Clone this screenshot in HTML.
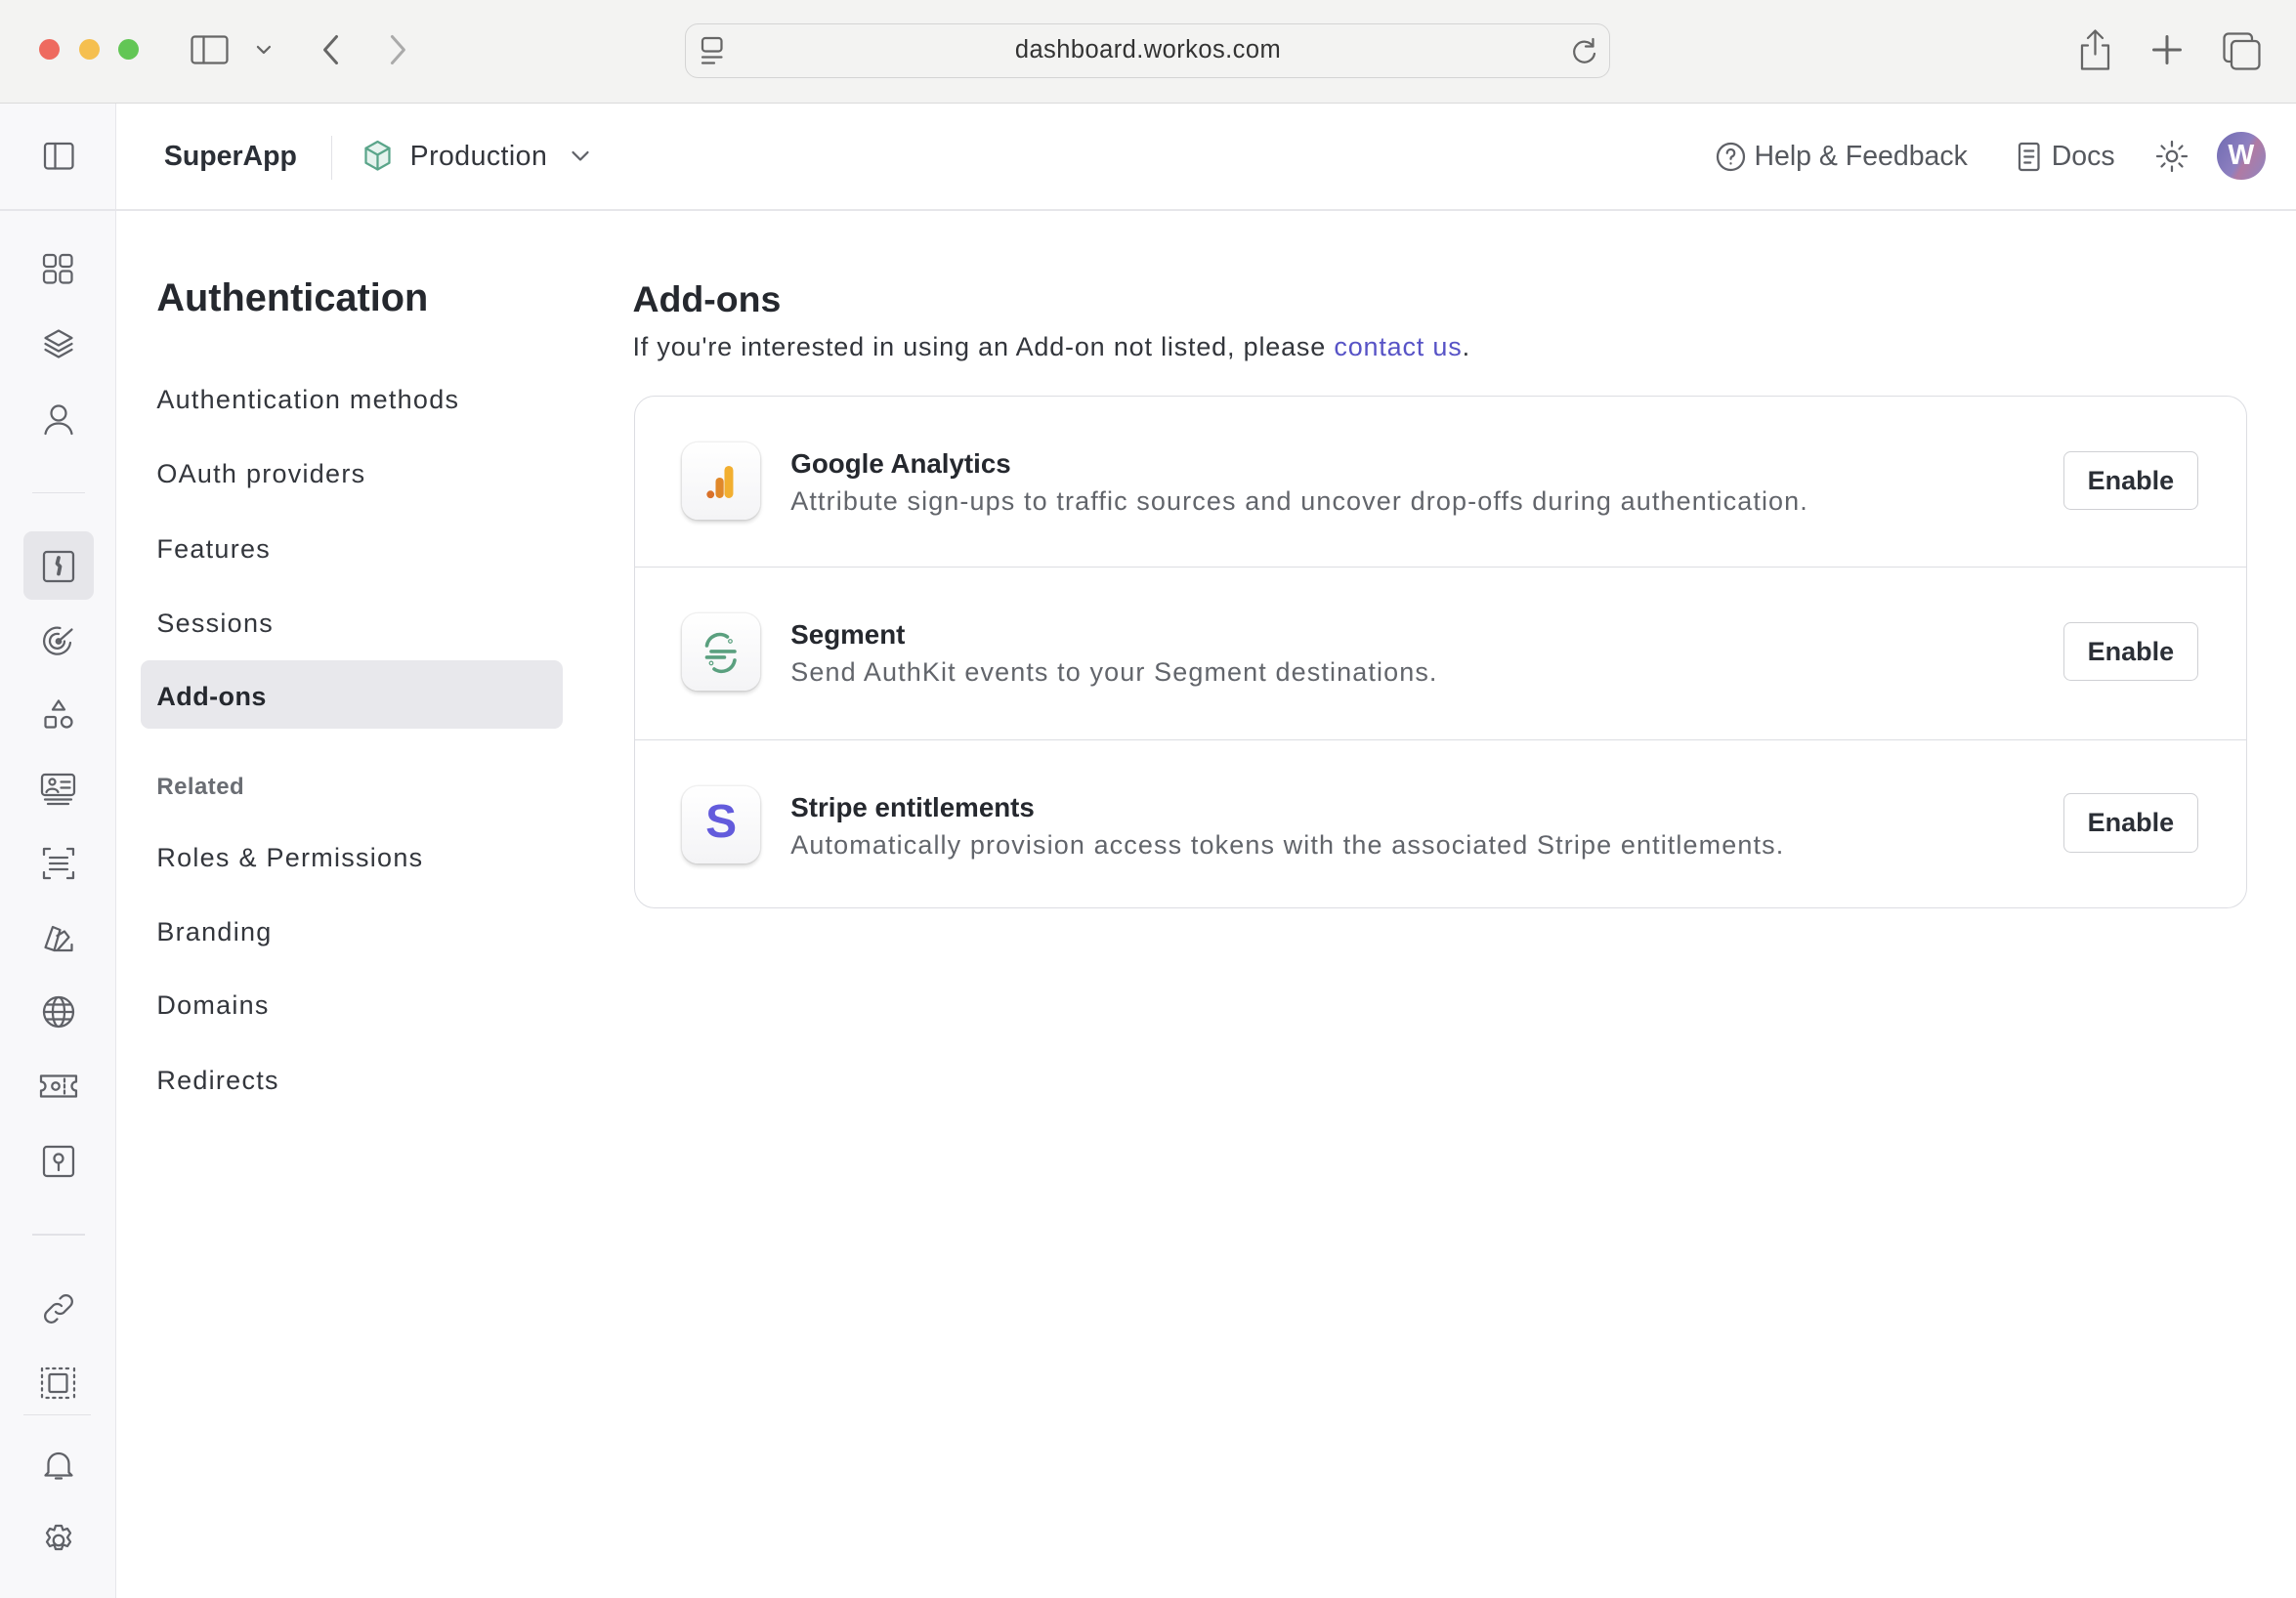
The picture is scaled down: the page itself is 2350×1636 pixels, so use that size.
<!DOCTYPE html>
<html><head><meta charset="utf-8">
<style>
html,body{margin:0;padding:0;width:2350px;height:1636px;overflow:hidden;background:#fff}
#w{zoom:1.49872;width:1568px;height:1092px;position:relative;font-family:"Liberation Sans",sans-serif;color:#2b2f36}
.a{position:absolute}
svg.i{position:absolute;fill:none;stroke:#5f6167;stroke-width:1.5;stroke-linecap:round;stroke-linejoin:round}
.nav{position:absolute;left:107px;font-size:18px;color:#33363c;line-height:22px;letter-spacing:0.85px}
.row-t{position:absolute;left:540px;font-size:18.5px;font-weight:bold;color:#25282e}
.row-d{position:absolute;left:540px;font-size:18px;color:#62656b;letter-spacing:0.75px}
.btn{position:absolute;left:1409px;width:91px;height:39px;border:1px solid #cfd0d4;border-radius:5px;font-size:18px;font-weight:bold;color:#2b2f36;text-align:center;line-height:39px;background:#fff}
.ic{position:absolute;left:466px;width:53px;height:53px;border-radius:11px;background:linear-gradient(#fff,#f4f4f6);box-shadow:0 2px 3px rgba(0,0,0,.15),0 0 0 1px rgba(0,0,0,.05)}
</style></head><body><div id="w">
<div class="a" style="left:0;top:0;width:1568px;height:70px;background:#f3f3f2;border-bottom:1px solid #dadada"></div>
<div class="a" style="left:27px;top:27px;width:14px;height:14px;border-radius:50%;background:#ee6a5f"></div>
<div class="a" style="left:54px;top:27px;width:14px;height:14px;border-radius:50%;background:#f5bf4f"></div>
<div class="a" style="left:81px;top:27px;width:14px;height:14px;border-radius:50%;background:#62c655"></div>
<svg class="i" style="left:128px;top:22px;stroke:#666" width="60" height="24"><rect x="3" y="3" width="24" height="18" rx="2"/><line x1="11" y1="3" x2="11" y2="21"/><path d="M48 10l4 4 4-4"/></svg>
<svg class="i" style="left:215px;top:22px;stroke:#666;stroke-width:2" width="70" height="24"><path d="M15 3l-8 9 8 9"/><path d="M53 3l8 9-8 9" stroke="#aaa"/></svg>
<div class="a" style="left:468px;top:16px;width:630px;height:36px;border:1px solid #d4d4d4;border-radius:9px;background:#f3f3f2"></div>
<svg class="i" style="left:478px;top:24px;stroke:#666" width="20" height="22"><rect x="2" y="2" width="13" height="9" rx="2"/><line x1="2" y1="15" x2="15" y2="15"/><line x1="2" y1="19" x2="10" y2="19"/></svg>
<div class="a" style="left:468px;top:25px;width:632px;text-align:center;font-size:17px;color:#333;letter-spacing:0.3px">dashboard.workos.com</div>
<svg class="i" style="left:1073px;top:25px;stroke:#666" width="20" height="20"><path d="M15 7a7 7 0 1 0 1 5"/><path d="M15 2v5h-5"/></svg>
<svg class="i" style="left:1418px;top:18px;stroke:#666" width="26" height="32"><path d="M13 3v16M8 8l5-5 5 5"/><path d="M8 13H4v16h18V13h-4"/></svg>
<svg class="i" style="left:1468px;top:22px;stroke:#666;stroke-width:2" width="24" height="24"><path d="M12 3v18M3 12h18"/></svg>
<svg class="i" style="left:1516px;top:20px;stroke:#666" width="30" height="30"><rect x="3" y="3" width="19" height="19" rx="3"/><rect x="8" y="8" width="19" height="19" rx="3" fill="#f3f3f2"/></svg>
<div class="a" style="left:0;top:71px;width:79px;height:1021px;background:#f8f8fa;border-right:1px solid #e6e6ea"></div>
<div class="a" style="left:80px;top:143px;width:1488px;height:1px;background:#e6e6ea"></div>
<div class="a" style="left:0;top:143px;width:80px;height:1px;background:#e6e6ea"></div>
<svg class="i" style="left:29px;top:96px" width="24" height="22"><rect x="2" y="2" width="19" height="17" rx="2"/><line x1="9" y1="2" x2="9" y2="19"/></svg>
<svg class="i" style="left:28px;top:172px" width="24" height="24"><rect x="2" y="2" width="8" height="8" rx="2"/><rect x="13" y="2" width="8" height="8" rx="2"/><rect x="2" y="13" width="8" height="8" rx="2"/><rect x="13" y="13" width="8" height="8" rx="2"/></svg>
<svg class="i" style="left:28px;top:223px" width="24" height="24"><path d="M12 3l9 5-9 5-9-5z"/><path d="M3 12l9 5 9-5"/><path d="M3 16l9 5 9-5"/></svg>
<svg class="i" style="left:28px;top:274px" width="24" height="24"><circle cx="12" cy="8" r="5"/><path d="M3 22c1-5 5-7 9-7s8 2 9 7"/></svg>
<div class="a" style="left:22px;top:336px;width:36px;height:1px;background:#e2e2e6"></div>
<div class="a" style="left:16px;top:363px;width:48px;height:47px;border-radius:6px;background:#e6e6ea"></div>
<svg class="i" style="left:28px;top:375px" width="24" height="24"><rect x="2" y="2" width="20" height="20" rx="2"/><path d="M12 6l-1 4 2 2-1 5" stroke-width="2.5"/></svg>
<svg class="i" style="left:28px;top:425px" width="24" height="24"><path d="M20 14a9 9 0 1 1-7-10"/><path d="M16 13a5 5 0 1 1-4-5"/><circle cx="12" cy="13" r="1.5"/><path d="M12 13l9-8"/></svg>
<svg class="i" style="left:28px;top:476px" width="24" height="24"><path d="M12 3l4 6H8z"/><rect x="3" y="14" width="7" height="7" rx="1"/><circle cx="17.5" cy="17.5" r="3.5"/></svg>
<svg class="i" style="left:27px;top:527px" width="26" height="24"><rect x="2" y="2" width="22" height="14" rx="2"/><circle cx="9" cy="7" r="2"/><path d="M5 14c1-3 7-3 8 0M15 7h6M15 11h6M4 19h18M6 22h14"/></svg>
<svg class="i" style="left:28px;top:578px" width="24" height="24"><path d="M2 6V2h4M18 2h4v4M22 18v4h-4M6 22H2v-4M6 8h12M6 12h12M6 16h12"/></svg>
<svg class="i" style="left:28px;top:629px" width="24" height="24"><path d="M3 18l5-14 5 2-4 14z"/><path d="M11 10l5-3 3 4-8 9M9 20h12v-4"/></svg>
<svg class="i" style="left:28px;top:679px" width="24" height="24"><circle cx="12" cy="12" r="10"/><ellipse cx="12" cy="12" rx="4" ry="10"/><path d="M2 12h20M4 7h16M4 17h16"/></svg>
<svg class="i" style="left:26px;top:730px" width="28" height="24"><path d="M2 5h24v4a3 3 0 0 0 0 6v4H2v-4a3 3 0 0 0 0-6z"/><circle cx="12" cy="12" r="2.5"/><path d="M18 7v2M18 11v2M18 15v2"/></svg>
<svg class="i" style="left:28px;top:781px" width="24" height="24"><rect x="2" y="2" width="20" height="20" rx="2"/><circle cx="12" cy="10" r="3"/><path d="M12 13v5"/></svg>
<div class="a" style="left:22px;top:843px;width:36px;height:1px;background:#e2e2e6"></div>
<svg class="i" style="left:28px;top:882px" width="24" height="24"><path d="M10 14a4 4 0 0 0 6 0l4-4a4 4 0 0 0-6-6l-1 1"/><path d="M14 10a4 4 0 0 0-6 0l-4 4a4 4 0 0 0 6 6l1-1"/></svg>
<svg class="i" style="left:27px;top:933px" width="26" height="24"><rect x="7" y="6" width="12" height="12" rx="1"/><path d="M2 2v20M24 2v20M5 2h16M5 22h16" stroke-dasharray="1.5 3"/></svg>
<div class="a" style="left:16px;top:966px;width:46px;height:1px;background:#e2e2e6"></div>
<svg class="i" style="left:28px;top:989px" width="24" height="24"><path d="M5 17V11a7 7 0 0 1 14 0v6l2 2H3z"/><path d="M10 21h4"/></svg>
<svg class="i" style="left:28px;top:1040px" width="24" height="24"><circle cx="12" cy="12" r="3.5"/><path d="M10 2h4l1 3 3-1 2 3-2 3 2 3-2 3-3-1-1 3h-4l-1-3-3 1-2-3 2-3-2-3 2-3 3 1z"/></svg>
<div class="a" style="left:112px;top:96px;font-size:19px;font-weight:bold;color:#2b2f36">SuperApp</div>
<div class="a" style="left:226px;top:93px;width:1px;height:30px;background:#e2e2e6"></div>
<svg class="i" style="left:247px;top:95px;stroke:#5aa58a" width="22" height="24"><path d="M11 2l8 4.5v10L11 21l-8-4.5v-10z" fill="#e6f3ee"/><path d="M3 6.5l8 4.5 8-4.5M11 11v10"/></svg>
<div class="a" style="left:280px;top:96px;font-size:19px;color:#33363c;letter-spacing:0.3px">Production</div>
<svg class="i" style="left:388px;top:100px" width="16" height="14"><path d="M3 4l5 5 5-5"/></svg>
<svg class="i" style="left:1171px;top:96px" width="22" height="22"><circle cx="11" cy="11" r="9"/><path d="M8.5 8.5a2.5 2.5 0 1 1 3.5 2.3c-.7.3-1 .9-1 1.7M11 15.5v.2"/></svg>
<div class="a" style="left:1198px;top:96px;font-size:19px;color:#55585e">Help &amp; Feedback</div>
<svg class="i" style="left:1377px;top:96px" width="18" height="22"><rect x="2" y="2" width="13" height="18" rx="1.5"/><path d="M5.5 7h6M5.5 11h6M5.5 15h4"/></svg>
<div class="a" style="left:1401px;top:96px;font-size:19px;color:#55585e">Docs</div>
<svg class="i" style="left:1471px;top:95px" width="24" height="24"><circle cx="12" cy="12" r="3.5"/><path d="M12 2v3M12 19v3M2 12h3M19 12h3M5 5l2 2M17 17l2 2M5 19l2-2M17 7l2-2"/></svg>
<div class="a" style="left:1514px;top:90px;width:33px;height:33px;border-radius:50%;background:linear-gradient(120deg,#6f6bb2,#8e80c0 50%,#b07aa3 60%,#8d86c2);color:#fff;font-size:19px;font-weight:bold;text-align:center;line-height:33px">W</div>
<div class="a" style="left:107px;top:189px;font-size:26.5px;font-weight:bold;color:#25282e">Authentication</div>
<div class="nav" style="top:262px">Authentication methods</div>
<div class="nav" style="top:313px">OAuth providers</div>
<div class="nav" style="top:364px">Features</div>
<div class="nav" style="top:415px">Sessions</div>
<div class="a" style="left:96px;top:451px;width:288px;height:47px;border-radius:6px;background:#e8e8ec"></div>
<div class="nav" style="top:465px;font-weight:bold;color:#25282e;letter-spacing:0.3px">Add-ons</div>
<div class="nav" style="top:527px;font-size:16px;font-weight:bold;color:#6a6d73;letter-spacing:0.3px">Related</div>
<div class="nav" style="top:575px">Roles &amp; Permissions</div>
<div class="nav" style="top:626px">Branding</div>
<div class="nav" style="top:676px">Domains</div>
<div class="nav" style="top:727px">Redirects</div>
<div class="a" style="left:432px;top:190px;font-size:25px;font-weight:bold;color:#25282e">Add-ons</div>
<div class="a" style="left:432px;top:227px;font-size:18px;color:#33363c;letter-spacing:0.55px">If you're interested in using an Add-on not listed, please <span style="color:#5753c6">contact us</span>.</div>
<div class="a" style="left:433px;top:270px;width:1100px;height:349px;border:1px solid #dcdde2;border-radius:14px"></div>
<div class="a" style="left:434px;top:387px;width:1100px;height:1px;background:#dcdde2"></div>
<div class="a" style="left:434px;top:505px;width:1100px;height:1px;background:#dcdde2"></div>
<div class="ic" style="top:302px"><svg width="53" height="53" style="position:absolute;left:0;top:0"><rect x="29" y="16" width="6" height="22" rx="3" fill="#f2af30"/><rect x="23" y="24" width="5.5" height="14" rx="2.7" fill="#e0882a"/><circle cx="19.5" cy="35.5" r="2.6" fill="#d9712a"/></svg></div>
<div class="ic" style="top:419px"><svg width="53" height="53" style="position:absolute;left:0;top:0;fill:none;stroke:#5aa07f;stroke-width:2.4;stroke-linecap:round"><path d="M17 22a9 9 0 0 1 14-6"/><path d="M36 32a9 9 0 0 1-14 6"/><path d="M20 26h16M17 30h12"/><circle cx="33" cy="19" r=".4"/><circle cx="20" cy="34" r=".4"/></svg></div>
<div class="ic" style="top:537px"><div style="position:absolute;left:0;top:6px;width:53px;text-align:center;font-size:32px;font-weight:bold;color:#635bdc">S</div></div>
<div class="row-t" style="top:306px">Google Analytics</div>
<div class="row-d" style="top:332px">Attribute sign-ups to traffic sources and uncover drop-offs during authentication.</div>
<div class="row-t" style="top:423px">Segment</div>
<div class="row-d" style="top:449px">Send AuthKit events to your Segment destinations.</div>
<div class="row-t" style="top:541px">Stripe entitlements</div>
<div class="row-d" style="top:567px">Automatically provision access tokens with the associated Stripe entitlements.</div>
<div class="btn" style="top:308px">Enable</div>
<div class="btn" style="top:425px">Enable</div>
<div class="btn" style="top:542px">Enable</div>
</div></body></html>
